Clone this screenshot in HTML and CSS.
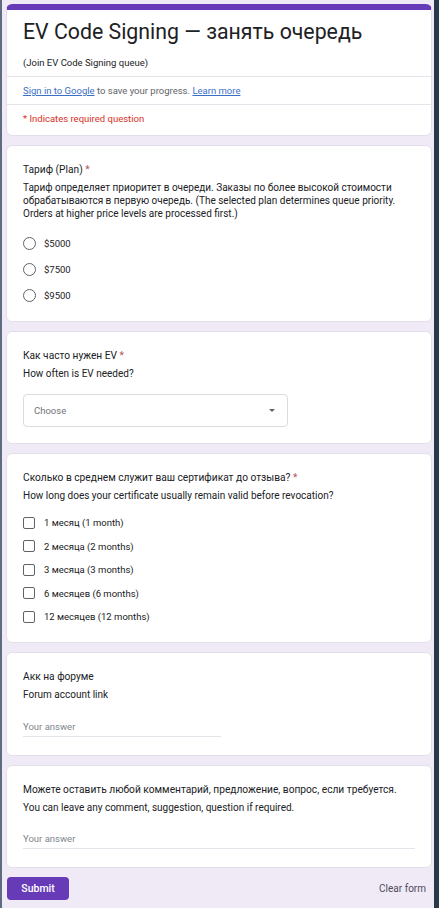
FILE: index.html
```html
<!DOCTYPE html>
<html lang="ru">
<head>
<meta charset="utf-8">
<title>EV Code Signing — занять очередь</title>
<link rel="stylesheet" href="styles.css">
</head>
<body>
<div class="frame">
  <div class="card header">
    <div class="head-top">
      <h1 class="form-title">EV Code Signing — занять очередь</h1>
      <div class="form-desc">(Join EV Code Signing queue)</div>
    </div>
    <div class="head-row"><a class="link" href="#">Sign in to Google</a> to save your progress. <a class="link" href="#">Learn more</a></div>
    <div class="head-row required-note">* Indicates required question</div>
  </div>

  <div class="card q q-radio">
    <div class="q-title">Тариф (Plan) <span class="star">*</span></div>
    <div class="q-desc">Тариф определяет приоритет в очереди. Заказы по более высокой стоимости обрабатываются в первую очередь. (The selected plan determines queue priority. Orders at higher price levels are processed first.)</div>
    <div class="options radios">
      <div class="opt"><span class="radio"></span><span class="opt-label">$5000</span></div>
      <div class="opt"><span class="radio"></span><span class="opt-label">$7500</span></div>
      <div class="opt"><span class="radio"></span><span class="opt-label">$9500</span></div>
    </div>
  </div>

  <div class="card q q-select">
    <div class="q-title">Как часто нужен EV <span class="star">*</span></div>
    <div class="q-desc">How often is EV needed?</div>
    <div class="select"><span class="select-text">Choose</span><span class="caret"></span></div>
  </div>

  <div class="card q q-checks">
    <div class="q-title">Сколько в среднем служит ваш сертификат до отзыва? <span class="star">*</span></div>
    <div class="q-desc">How long does your certificate usually remain valid before revocation?</div>
    <div class="options checks">
      <div class="opt"><span class="check"></span><span class="opt-label">1 месяц (1 month)</span></div>
      <div class="opt"><span class="check"></span><span class="opt-label">2 месяца (2 months)</span></div>
      <div class="opt"><span class="check"></span><span class="opt-label">3 месяца (3 months)</span></div>
      <div class="opt"><span class="check"></span><span class="opt-label">6 месяцев (6 months)</span></div>
      <div class="opt"><span class="check"></span><span class="opt-label">12 месяцев (12 months)</span></div>
    </div>
  </div>

  <div class="card q q-text">
    <div class="q-title">Акк на форуме</div>
    <div class="q-desc">Forum account link</div>
    <div class="answer short">Your answer</div>
  </div>

  <div class="card q q-text">
    <div class="q-title">Можете оставить любой комментарий, предложение, вопрос, если требуется.</div>
    <div class="q-desc">You can leave any comment, suggestion, question if required.</div>
    <div class="answer long">Your answer</div>
  </div>

  <div class="actions">
    <button class="submit" type="button">Submit</button>
    <span class="clear">Clear form</span>
  </div>
</div>
</body>
</html>
```

FILE: styles.css
```css
* { box-sizing: border-box; }
html, body { margin: 0; padding: 0; }
body {
  font-family: Roboto, "Noto Sans", Arial, sans-serif;
  color: #202124;
  background: #efeaf6;
}
.frame {
  min-height: 908px;
  border-left: 2px solid #5d6c80;
  border-right: 5px solid #2a384c;
  padding: 4px 2px 0 4px;
  display: flex;
  flex-direction: column;
  gap: 9px;
  background: #efeaf6;
}
.card {
  background: #fff;
  border: 1px solid #e3dfea;
  border-radius: 6px;
}
.header {
  border-top: 6px solid #673ab7;
  padding: 0;
}
.head-top {
  padding: 8px 16px 7px;
  border-bottom: 1px solid #e6e3ea;
}
.form-title {
  margin: 0;
  font-size: 21.3px;
  line-height: 28px;
  font-weight: 400;
  color: #202124;
}
.form-desc {
  margin-top: 10px;
  font-size: 9.5px;
  line-height: 13px;
  color: #202124;
}
.head-row {
  padding: 7px 16px;
  font-size: 9.5px;
  line-height: 13px;
  color: #5f6368;
}
.head-row + .head-row { border-top: 1px solid #e6e3ea; }
.required-note { color: #d93025; padding-bottom: 10px; }
.link { color: #3b6fc4; text-decoration: underline; }

.q { padding: 17px 16px 13px; }
.q-title {
  font-size: 10.2px;
  line-height: 14px;
  color: #202124;
}
.star { color: #b8545c; }
.q-desc {
  margin-top: 4px;
  font-size: 10px;
  line-height: 13px;
  color: #202124;
}
.options { display: flex; flex-direction: column; }
.radios { margin-top: 10px; }
.radios .opt { height: 26px; }
.checks { margin-top: 9px; }
.checks .opt { height: 23.5px; }
.opt {
  display: flex;
  align-items: center;
  gap: 8px;
}
.radio {
  width: 13px;
  height: 13px;
  border: 1.5px solid #5f6368;
  border-radius: 50%;
  flex: none;
}
.check {
  width: 12px;
  height: 12px;
  border: 1.5px solid #5f6368;
  border-radius: 2px;
  flex: none;
}
.checks .opt { gap: 9px; }
.opt-label {
  font-size: 9.5px;
  color: #202124;
}
.q-select { padding-bottom: 16px; }
.q-checks { padding-bottom: 13px; }
.select {
  margin-top: 14px;
  width: 265px;
  height: 33px;
  border: 1px solid #dadce0;
  border-radius: 4px;
  display: flex;
  align-items: center;
  justify-content: space-between;
  padding: 0 12px 0 10px;
}
.select-text { font-size: 9.5px; color: #70757a; }
.caret {
  width: 0;
  height: 0;
  border-left: 3px solid transparent;
  border-right: 3px solid transparent;
  border-top: 3px solid #5f6368;
}
.q-text { padding-bottom: 18px; }
.answer {
  margin-top: 19px;
  font-size: 9.5px;
  line-height: 14px;
  color: #80868b;
  border-bottom: 1px solid #e6e3ea;
  padding-bottom: 2px;
}
.answer.short { width: 198px; }
.answer.long { width: 100%; margin-top: 18px; }
.actions {
  display: flex;
  align-items: center;
  justify-content: space-between;
  padding: 0 6px 0 1px;
}
.submit {
  width: 62px;
  height: 23px;
  background: #673ab7;
  color: #fff;
  border: none;
  border-radius: 4px;
  font-family: Roboto, Arial, sans-serif;
  font-size: 10.5px;
  font-weight: 500;
  padding: 0;
}
.clear {
  font-size: 10px;
  color: #4f4a60;
}
```
